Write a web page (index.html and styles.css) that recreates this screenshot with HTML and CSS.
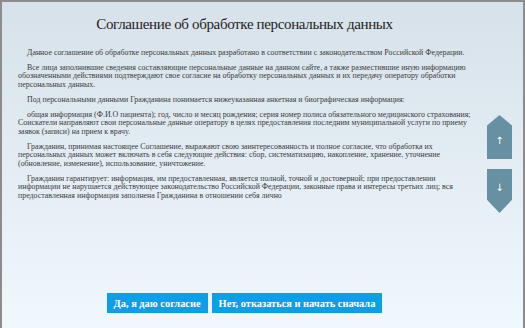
FILE: index.html
```html
<!DOCTYPE html>
<html>
<head>
  <title>Соглашение</title>
  <link rel="stylesheet" href="styles.css">
</head>
<body>
<div class="page">
  <div class="main">
    <h1>Соглашение об обработке персональных данных</h1>
    <div class="text">
      <p>Данное соглашение об обработке персональных данных разработано в соответствии с законодательством Российской Федерации.</p>
      <p>Все лица заполнившие сведения составляющие персональные данные на данном сайте, а также разместившие иную информацию обозначенными действиями подтверждают свое согласие на обработку персональных данных и их передачу оператору обработки персональных данных.</p>
      <p>Под персональными данными Гражданина понимается нижеуказанная анкетная и биографическая информация:</p>
      <p>общая информация (Ф.И.О пациента); год, число и месяц рождения; серия номер полиса обязательного медицинского страхования; Соискатели направляют свои персональные данные оператору в целях предоставления последним муниципальной услуги по приему заявок (записи) на прием к врачу.</p>
      <p>Гражданин, принимая настоящее Соглашение, выражают свою заинтересованность и полное согласие, что обработка их персональных данных может включать в себя следующие действия: сбор, систематизацию, накопление, хранение, уточнение (обновление, изменение), использование, уничтожение.</p>
      <p>Гражданин гарантирует: информация, им предоставленная, является полной, точной и достоверной; при предоставлении информации не нарушается действующее законодательство Российской Федерации, законные права и интересы третьих лиц; вся предоставленная информация заполнена Гражданина в отношении себя лично</p>
    </div>
    <div class="buttons">
      <button class="btn">Да, я даю согласие</button>
      <button class="btn">Нет, отказаться и начать сначала</button>
    </div>
  </div>
  <div class="side">
    <div class="arrow up">&#8593;</div>
    <div class="arrow down">&#8595;</div>
  </div>
</div>
</body>
</html>
```

FILE: styles.css
```css
html, body {
  margin: 0;
  padding: 0;
  height: 100%;
}

body {
  font-family: "Liberation Serif", serif;
  background: linear-gradient(to bottom, #d7e1e9, #eff8fd);
  box-sizing: border-box;
  border: 2px solid #8c8c8c;
  border-bottom: none;
}

.page {
  display: flex;
  height: 100%;
}

.main {
  flex: 1;
  display: flex;
  flex-direction: column;
  padding: 0 10px 0 16px;
}

h1 {
  font-weight: normal;
  font-size: 15px;
  letter-spacing: -0.35px;
  line-height: 20px;
  color: #222;
  text-align: center;
  margin: 12px 6px 0 0;
}

.text {
  margin-top: 15px;
  font-size: 7.87px;
  letter-spacing: 0.02px;
  line-height: 8.7px;
  color: #3a3a3a;
}

.text p {
  margin: 0 0 6px 0;
  text-indent: 9px;
}

.buttons {
  margin-top: auto;
  margin-bottom: 15px;
  display: flex;
  justify-content: center;
  gap: 4px;
  padding-right: 6px;
}

.btn {
  background: #0aa0e8;
  color: #fff;
  border: none;
  font-family: "Liberation Serif", serif;
  font-weight: bold;
  font-size: 10.4px;
  height: 20px;
  padding: 0 7px;
  cursor: pointer;
}

.side {
  width: 36px;
  padding-top: 113px;
  display: flex;
  flex-direction: column;
  gap: 10px;
}

.arrow {
  width: 25px;
  height: 44px;
  background: #6890a3;
  color: #fff;
  font-family: "DejaVu Sans", sans-serif;
  font-size: 10px;
  display: flex;
  align-items: center;
  justify-content: center;
}

.up {
  clip-path: polygon(50% 0, 100% 24%, 100% 100%, 0 100%, 0 24%);
  padding-top: 6px;
  box-sizing: border-box;
}

.down {
  clip-path: polygon(0 0, 100% 0, 100% 70%, 50% 100%, 0 70%);
  padding-bottom: 8px;
  box-sizing: border-box;
}
```
